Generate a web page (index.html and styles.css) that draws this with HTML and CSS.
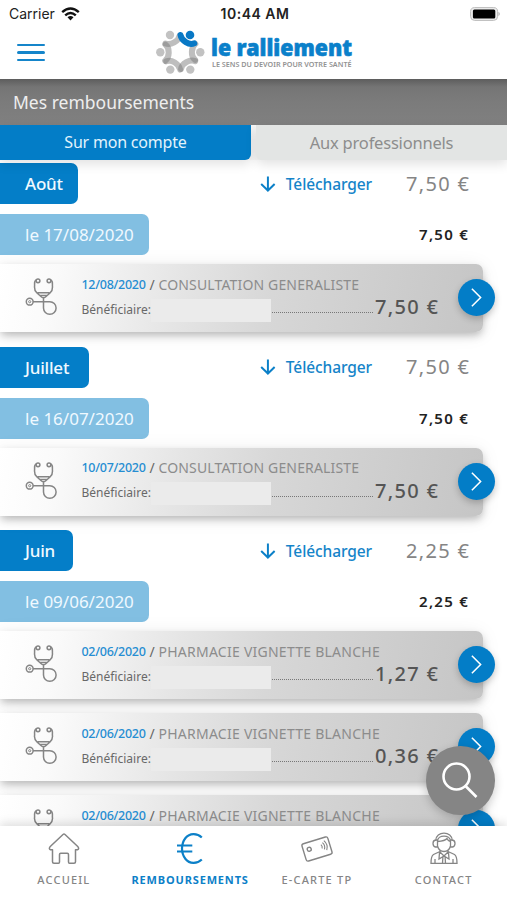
FILE: index.html
```html
<!DOCTYPE html>
<html lang="fr">
<head>
<meta charset="utf-8">
<title>Mes remboursements</title>
<link rel="stylesheet" href="styles.css">
</head>
<body>
<svg class="defs" width="0" height="0">
  <symbol id="steth" viewBox="0 0 34 40">
    <g fill="none" stroke="#858585" stroke-width="1.500">
      <circle cx="13" cy="3.800" r="1.900"/><circle cx="24" cy="3.800" r="1.900"/>
      <path d="M11.300 3C8.500 4 10 7 9.500 10Q9.300 13.500 12 16L16.500 20Q18.500 21.500 20.500 20L25 16Q27.700 13.500 27.500 10C27 7 28.500 4 25.700 3M12.500 15.800H24.500M14.500 18.500H22.500M18.500 21V31A6.300 6.300 0 1 0 24.800 24.700H8"/>
      <circle cx="4.700" cy="24.700" r="3.400"/><circle cx="4.700" cy="24.700" r="1.100" stroke-width="1"/>
    </g>
  </symbol>
  <symbol id="down" viewBox="0 0 16 18"><path d="M8 1.500V15.500M1.200 9L8 15.600L14.800 9" fill="none" stroke="#0c80c8" stroke-width="2"/></symbol>
  <symbol id="chev" viewBox="0 0 36 36"><path d="M13.500 9.500L22 18L13.500 26.500" fill="none" stroke="#fff" stroke-width="1.500"/></symbol>
</svg>
<div class="status">
  <div class="carrier">Carrier
    <svg width="19" height="14" viewBox="0 0 19 14"><g fill="none" stroke="#111" stroke-width="2.400"><path d="M1.200 5.200Q9.500-2.200 17.800 5.200M4.200 8.400Q9.500 3.600 14.800 8.400"/></g><path d="M6.500 10.300Q9.500 7.800 12.500 10.300L9.500 13.500Z" fill="#111"/></svg>
  </div>
  <div class="clock">10:44 AM</div>
  <svg class="battery" width="31" height="14" viewBox="0 0 31 14"><rect x=".6" y=".6" width="27" height="12.800" rx="4" fill="#eee" stroke="#bbb"/><rect x="2.900" y="2.600" width="22.400" height="9" rx="1.500" fill="#000"/><path d="M28.500 4.800Q31 7 28.500 9.200Z" fill="#aaa"/></svg>
</div>
<header class="header">
  <div class="burger"><i></i><i></i><i></i></div>
  <svg class="logo" width="200" height="48" viewBox="155 28 200 48">
    <defs><path id="arm" d="M180.500 35C181.500 40.700 189 45.500 194.300 43.300" fill="none" stroke-width="6" stroke-linecap="round"/></defs>
    <g stroke="#777" stroke-opacity=".48">
      <use href="#arm" transform="rotate(60 180.300 52.300)"/><use href="#arm" transform="rotate(120 180.300 52.300)"/><use href="#arm" transform="rotate(180 180.300 52.300)"/><use href="#arm" transform="rotate(240 180.300 52.300)"/><use href="#arm" transform="rotate(300 180.300 52.300)"/>
    </g>
    <g fill="#c2c2c2"><circle cx="170" cy="35" r="4.200"/><circle cx="200.300" cy="52.300" r="4.200"/><circle cx="190.300" cy="69.600" r="4.200"/><circle cx="170.300" cy="69.600" r="4.200"/><circle cx="160.300" cy="52.300" r="4.200"/></g>
    <use href="#arm" stroke="#0878c5"/><circle cx="190" cy="35" r="4.300" fill="#0878c5"/>
    <text class="brand" x="211" y="55.500" textLength="141" lengthAdjust="spacingAndGlyphs">le ralliement</text>
    <text class="motto" x="212" y="67" textLength="139.500" lengthAdjust="spacingAndGlyphs">LE SENS DU DEVOIR POUR VOTRE SANTÉ</text>
  </svg>
</header>
<h1 class="title"><span>Mes remboursements</span></h1>
<div class="tabs"><div class="tab on">Sur mon compte</div><div class="tab off">Aux professionnels</div></div>
<main class="list">
  <section class="month">
    <div class="row"><b class="pill m1">Août</b><a class="dl"><svg width="16" height="18"><use href="#down"/></svg><span>Télécharger</span></a><span class="total">7,50 €</span></div>
    <div class="row"><b class="pill date">le 17/08/2020</b><span class="sub">7,50 €</span></div>
    <article class="card"><svg class="steth" width="34" height="40"><use href="#steth"/></svg><div class="info"><div class="line"><span class="d">12/08/2020</span><span class="slash">/</span><span class="what w1">CONSULTATION GENERALISTE</span></div><div class="line2"><span class="ben">Bénéficiaire:</span><i class="mask"></i><i class="dots"></i><span class="amt">7,50 €</span></div></div><svg class="go" width="37" height="37"><use href="#chev"/></svg></article>
  </section>
  <section class="month">
    <div class="row"><b class="pill m2">Juillet</b><a class="dl"><svg width="16" height="18"><use href="#down"/></svg><span>Télécharger</span></a><span class="total">7,50 €</span></div>
    <div class="row"><b class="pill date">le 16/07/2020</b><span class="sub">7,50 €</span></div>
    <article class="card"><svg class="steth" width="34" height="40"><use href="#steth"/></svg><div class="info"><div class="line"><span class="d">10/07/2020</span><span class="slash">/</span><span class="what w1">CONSULTATION GENERALISTE</span></div><div class="line2"><span class="ben">Bénéficiaire:</span><i class="mask"></i><i class="dots"></i><span class="amt">7,50 €</span></div></div><svg class="go" width="37" height="37"><use href="#chev"/></svg></article>
  </section>
  <section class="month">
    <div class="row"><b class="pill m3">Juin</b><a class="dl"><svg width="16" height="18"><use href="#down"/></svg><span>Télécharger</span></a><span class="total">2,25 €</span></div>
    <div class="row"><b class="pill date">le 09/06/2020</b><span class="sub">2,25 €</span></div>
    <article class="card"><svg class="steth" width="34" height="40"><use href="#steth"/></svg><div class="info"><div class="line"><span class="d">02/06/2020</span><span class="slash">/</span><span class="what w2">PHARMACIE VIGNETTE BLANCHE</span></div><div class="line2"><span class="ben">Bénéficiaire:</span><i class="mask"></i><i class="dots"></i><span class="amt">1,27 €</span></div></div><svg class="go" width="37" height="37"><use href="#chev"/></svg></article>
    <article class="card"><svg class="steth" width="34" height="40"><use href="#steth"/></svg><div class="info"><div class="line"><span class="d">02/06/2020</span><span class="slash">/</span><span class="what w2">PHARMACIE VIGNETTE BLANCHE</span></div><div class="line2"><span class="ben">Bénéficiaire:</span><i class="mask"></i><i class="dots"></i><span class="amt">0,36 €</span></div></div><svg class="go" width="37" height="37"><use href="#chev"/></svg></article>
    <article class="card"><svg class="steth" width="34" height="40"><use href="#steth"/></svg><div class="info"><div class="line"><span class="d">02/06/2020</span><span class="slash">/</span><span class="what w2">PHARMACIE VIGNETTE BLANCHE</span></div></div><svg class="go" width="37" height="37"><use href="#chev"/></svg></article>
  </section>
</main>
<div class="search"><svg width="68" height="68" viewBox="0 0 68 68" fill="none" stroke="#fff" stroke-width="2.600"><circle cx="30.500" cy="30.500" r="13"/><path d="M39.500 40L50.500 51"/></svg></div>
<nav class="nav">
  <a class="n1"><svg width="34" height="34" viewBox="0 0 34 34" fill="none" stroke="#858585" stroke-width="1.500" stroke-linejoin="round"><path d="M16 2.500Q17 1.600 18 2.500L31 14.800Q32.500 17 30.500 17.800H28.500V29.800Q28.500 31.300 27 31.300H22.500Q21.500 31.300 21.500 30V22.500Q21.500 21.300 20.300 21.300H13.700Q12.500 21.300 12.500 22.500V30Q12.500 31.300 11.500 31.300H7Q5.500 31.300 5.500 29.800V17.800H3.500Q1.500 17 3 14.800Z"/></svg><span>ACCUEIL</span></a>
  <a class="n2 sel"><svg width="34" height="34" viewBox="0 0 34 34" fill="none" stroke="#0c80c8" stroke-width="2.200"><path d="M28.800 5.500C24 .8 16.500 1 12.500 6Q9 10.500 9 16.500Q9 22.500 12.500 27C16.500 32 24 32.200 28.800 27.500M4 13.500H19.300M4 19.500H19.300"/></svg><span>REMBOURSEMENTS</span></a>
  <a class="n3"><svg width="34" height="34" viewBox="0 0 34 34" fill="none" stroke="#858585" stroke-width="1.400"><g transform="rotate(-17 17 17)"><rect x="3.500" y="8" width="27" height="18" rx="2"/><circle cx="9.500" cy="15" r="2"/><path d="M22 14Q23.300 16 22 18M24 12.500Q26.300 16 24 19.500M26 11Q29.300 16 26 21" stroke-width="1.100"/></g></svg><span>E-CARTE TP</span></a>
  <a class="n4"><svg width="34" height="34" viewBox="0 0 34 34" fill="none" stroke="#858585" stroke-width="1.300"><path d="M8.500 9C9 -1.500 25 -1.500 25.500 9M10.500 9C11 2.500 23 2.500 23.500 9M10.500 8H8.500Q6 8.500 6 11.500Q6 14.500 8.500 15H10.500ZM23.500 8H25.500Q28 8.500 28 11.500Q28 14.500 25.500 15H23.500ZM10.500 9.500Q18 9 20 6.500Q21 9 23.500 9.500M10.500 14Q12 19.500 17 19.500Q22 19.500 23.500 14M13 18V20L17 24L21 20V18M13 19.500L6.500 22.500Q4 24 4 31.300H30Q30 24 27.500 22.500L21 19.500M12.500 20.500L12 27L17 24L22 27L21.500 20.500M16 24L15.500 31M18 24L18.500 31M8 27V31M26 27V31"/></svg><span>CONTACT</span></a>
</nav>
</body>
</html>
```
FILE: styles.css
```css
* { box-sizing: border-box; }
body { margin: 0; width: 507px; height: 900px; overflow: hidden; position: relative; background: #fff; font-family: "Noto Sans", "Open Sans", sans-serif; display: flex; flex-direction: column; }
i { display: block; }
span, .tab, .pill { white-space: nowrap; }
.defs { position: absolute; }
.status { height: 27px; flex: none; display: grid; grid-template-columns: 1fr 70px 1fr; align-items: center; padding: 0 6px 0 9px; font: 14px/27px Inter, sans-serif; color: #222; }
.carrier { display: flex; align-items: center; gap: 6px; }
.clock { font-weight: 600; text-align: center; white-space: nowrap; letter-spacing: .5px; margin: 0 -3px; }
.battery { justify-self: end; }
.header { height: 52px; flex: none; display: flex; position: relative; }
.burger { margin: 17px 0 0 17px; width: 28px; display: flex; flex-direction: column; gap: 5px; height: 18px; }
.burger i { height: 2.400px; border-radius: 2px; background: #1585ca; }
.logo { margin: 1px 0 0 110px; }
.brand { font: 900 22px "Noto Sans", sans-serif; fill: #0a80ca; stroke: #0a80ca; stroke-width: .6px; }
.motto { font: 600 7.300px "Noto Sans", sans-serif; fill: #929292; }
.title { margin: 0; height: 46px; flex: none; padding-left: 13px; font-size: 17.500px; line-height: 46px; font-weight: 400; color: #eee; background: linear-gradient(#5d5d5d, #757575 8px, #7b7b7b 22px, #808080); }
.tabs { height: 34.500px; flex: none; display: flex; gap: 5px; background: #f8f8f8; font-size: 16.500px; letter-spacing: -.2px; line-height: 35px; text-align: center; position: relative; }
.tab { height: 34.500px; box-shadow: 0 4px 12px rgba(0,0,0,.12); }
.on { width: 251px; background: #037dc7; color: #e2f3fc; border-radius: 0 0 6px 0; font-size: 16px; }
.off { width: 251px; background: #e3e5e4; color: #8d8d8d; border-radius: 0 0 0 6px; }
.list { height: 666.500px; flex: none; overflow: hidden; padding-top: 3.500px; }
.month { margin-bottom: 14.700px; }
.row { height: 41px; display: flex; align-items: center; margin-bottom: 10px; }
.pill { height: 41px; padding-left: 25px; line-height: 42px; font-size: 17px; font-weight: 500; letter-spacing: -.2px; color: #f0f9ff; background: #047ec8; border-radius: 0 7px 7px 0; flex: none; }
.m1 { width: 78px; }
.m2 { width: 88.500px; }
.m3 { width: 72.500px; }
.date { width: 148.500px; background: #82bfe2; font-weight: 400; letter-spacing: 0; }
.dl { margin-left: auto; display: flex; gap: 9px; align-items: center; width: 111px; color: #1584c9; font-size: 15.500px; font-weight: 500; letter-spacing: -.1px; }
.dl svg { margin-left: -1px; }
.dl span { margin-left: 1px; }
.total { width: 64px; margin: -1px 37px 0 34px; font-size: 20px; letter-spacing: 1.300px; color: #858585; }
.sub { margin: -1px 38px 0 auto; width: 50px; font-size: 15px; font-weight: 600; letter-spacing: 1.300px; color: #222; }
.card { width: 483px; height: 68px; margin: -1px 0 0; display: flex; position: relative; border-radius: 0 7px 7px 0; background: linear-gradient(102deg, #fff 0%, #fafafa 12%, #e5e5e5 37%, #d7d7d7 56%, #c5c5c5 100%); box-shadow: 0 4px 8px -1px rgba(0,0,0,.26), 0 2px 20px rgba(0,0,0,.07); }
.card + .card { margin-top: 14px; }
.steth { margin: 13px 0 0 25px; flex: none; }
.info { margin-left: 22.500px; width: 359px; }
.line { height: 20px; margin-top: 10px; display: flex; align-items: center; }
.d { width: 68px; font-size: 12.500px; font-weight: 500; letter-spacing: -.28px; color: #258dd2; }
.slash { width: 9px; font-size: 14px; color: #666; }
.what { font-size: 14px; color: #8c8c8c; }
.w1 { letter-spacing: .15px; }
.w2 { letter-spacing: .25px; }
.line2 { height: 26px; margin-top: 2px; display: flex; align-items: center; }
.ben { width: 69.500px; font-size: 12px; color: #686868; }
.mask { width: 120px; height: 23px; background: #ebebeb; margin-top: 2px; }
.dots { width: 101px; margin: 7px 2px 0 1px; border-top: 1.500px dotted #777; }
.amt { font-size: 20px; font-weight: 500; letter-spacing: 1.300px; color: #555; margin-top: -5px; }
.go { position: absolute; right: -12px; top: 15px; border-radius: 50%; background: #037dc7; box-shadow: 0 3px 7px rgba(0,0,0,.22); }
.search { position: absolute; left: 426px; top: 746px; width: 68.500px; height: 68.500px; border-radius: 50%; background: #858585; box-shadow: 0 3px 10px rgba(0,0,0,.2); }
.nav { height: 74px; flex: none; background: #fff; display: grid; grid-template-columns: repeat(4, 1fr); position: relative; box-shadow: 0 -3px 9px rgba(0,0,0,.12); font-size: 11px; font-weight: 500; letter-spacing: 1.200px; color: #858585; }
.nav a { display: flex; flex-direction: column; align-items: center; padding-top: 6px; }
.nav span { line-height: 14px; margin-top: 7px; }
.n1 { padding-left: 1px; }
.nav .sel { color: #0c80c8; font-weight: 700; letter-spacing: .85px; }
```
